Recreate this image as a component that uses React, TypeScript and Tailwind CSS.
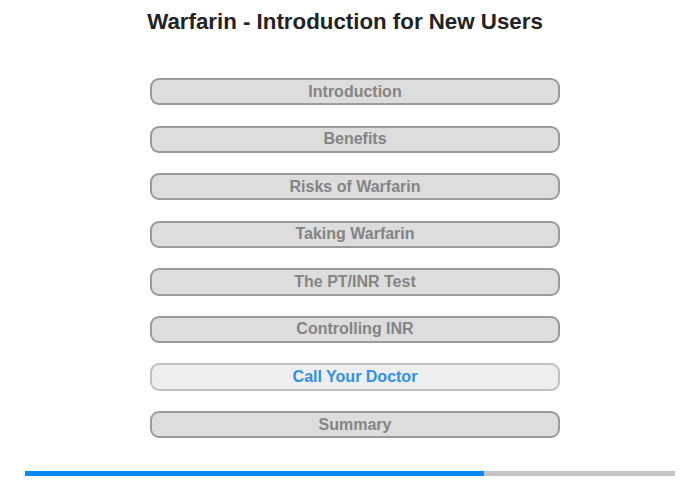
import React from "react";

const items = [
  "Introduction",
  "Benefits",
  "Risks of Warfarin",
  "Taking Warfarin",
  "The PT/INR Test",
  "Controlling INR",
  "Call Your Doctor",
  "Summary",
];

export default function App() {
  return (
    <div
      className="w-[700px] h-[480px] bg-white flex flex-col items-center overflow-hidden"
      style={{ fontFamily: '"Liberation Sans", Arial, sans-serif' }}
    >
      <h1 className="mt-[9px] mr-[10px] text-[22.3px] leading-[26px] font-bold text-[#222222]">
        Warfarin - Introduction for New Users
      </h1>
      <div className="mt-[43px] ml-[10px] flex flex-col gap-[20.4px]">
        {items.map((t) => {
          const active = t === "Call Your Doctor";
          return (
            <div
              key={t}
              className={
                active
                  ? "w-[410px] h-[27.2px] rounded-[9px] border-2 border-[#c0c0c0] bg-[#eeeeee] flex items-center justify-center text-[16px] font-bold text-[#2e90f2]"
                  : "w-[410px] h-[27.2px] rounded-[9px] border-2 border-[#9a9a9a] bg-[#dddddd] flex items-center justify-center text-[16px] font-bold text-[#848484]"
              }
            >
              {t}
            </div>
          );
        })}
      </div>
      <div className="mt-[33px] w-[650px] h-[5px] bg-[#c4c4c4] flex">
        <div className="w-[459px] h-full bg-[#0088fa]" />
      </div>
    </div>
  );
}
